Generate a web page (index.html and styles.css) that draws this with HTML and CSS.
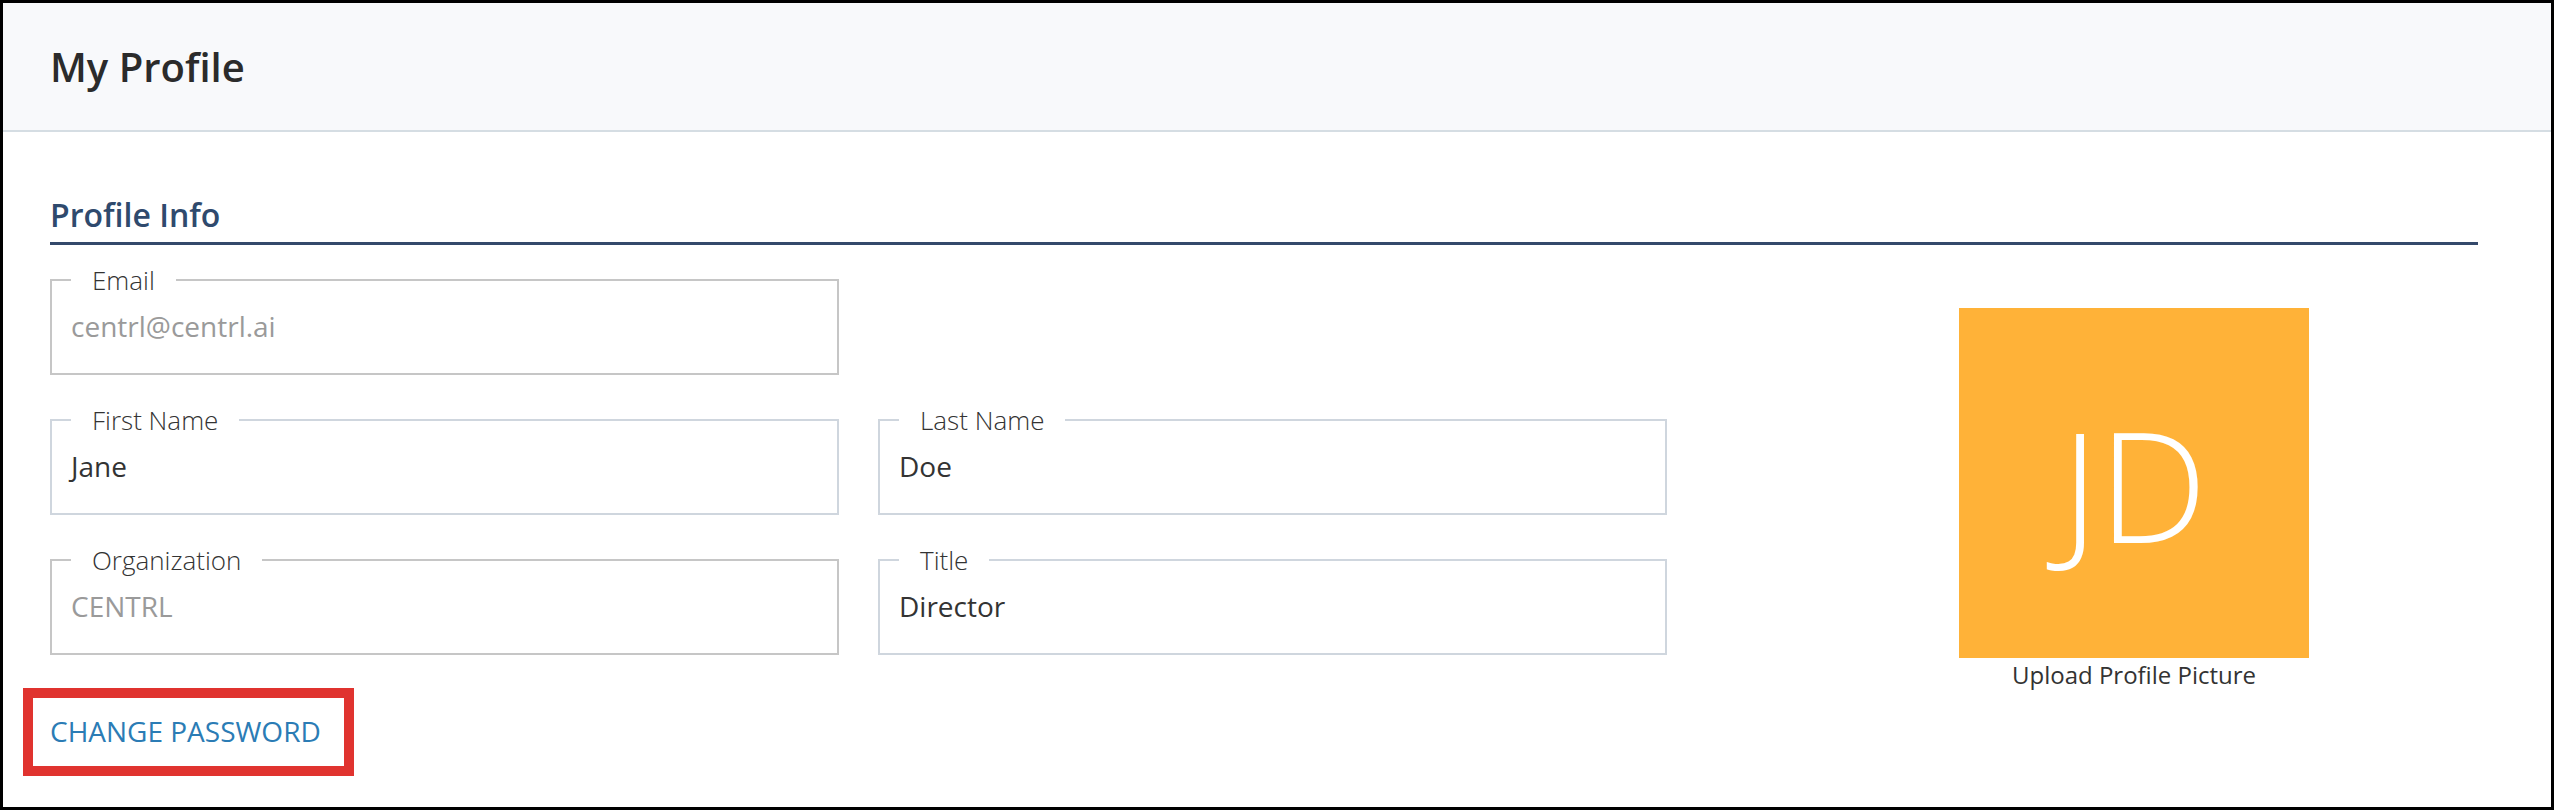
FILE: index.html
```html
<!DOCTYPE html>
<html lang="en">
<head>
<meta charset="utf-8">
<title>My Profile</title>
<link rel="stylesheet" href="styles.css">
</head>
<body>
<div class="page">
  <header class="page-header">
    <h1 class="page-title">My Profile</h1>
  </header>
  <main class="content">
    <h2 class="section-title">Profile Info</h2>
    <div class="profile-row">
      <div class="form-col">
        <div class="form-grid">
          <fieldset class="field field-disabled area-email">
            <legend class="field-label">Email</legend>
            <div class="field-value">centrl@centrl.ai</div>
          </fieldset>
          <fieldset class="field area-first">
            <legend class="field-label">First Name</legend>
            <div class="field-value">Jane</div>
          </fieldset>
          <fieldset class="field area-last">
            <legend class="field-label">Last Name</legend>
            <div class="field-value">Doe</div>
          </fieldset>
          <fieldset class="field field-disabled area-org">
            <legend class="field-label">Organization</legend>
            <div class="field-value">CENTRL</div>
          </fieldset>
          <fieldset class="field area-title">
            <legend class="field-label">Title</legend>
            <div class="field-value">Director</div>
          </fieldset>
        </div>
        <div class="password-row">
          <span class="highlight"><a class="change-password" href="#">CHANGE PASSWORD</a></span>
        </div>
      </div>
      <div class="avatar-col">
        <div class="avatar">JD</div>
        <div class="avatar-caption">Upload Profile Picture</div>
      </div>
    </div>
  </main>
</div>
</body>
</html>
```
FILE: styles.css
```css
html, body {
  margin: 0;
  padding: 0;
}

body {
  font-family: "Open Sans", "Noto Sans", sans-serif;
  background: #fff;
}

.page {
  box-sizing: border-box;
  width: 2554px;
  height: 810px;
  border: 3px solid #000;
  background: #fff;
  overflow: hidden;
}

.page-header {
  height: 127px;
  padding: 0 47px;
  display: flex;
  align-items: center;
  background: #f8f9fb;
  border-bottom: 2px solid #d5dde3;
}

.page-title {
  margin: 0;
  font-size: 40px;
  line-height: 53px;
  font-weight: 600;
  color: #2b2b2b;
}

.content {
  padding: 0 73px 0 47px;
}

.section-title {
  margin: 61px 0 0;
  padding-bottom: 5px;
  font-size: 32px;
  line-height: 44px;
  font-weight: 600;
  color: #2f4a6d;
  border-bottom: 3px solid #34496b;
}

.profile-row {
  display: flex;
  align-items: flex-start;
  margin-top: 17px;
}

.form-col {
  display: flex;
  flex-direction: column;
}

.form-grid {
  display: grid;
  grid-template-columns: 789px 789px;
  grid-template-areas:
    "email ."
    "first last"
    "org title";
  column-gap: 39px;
  row-gap: 27px;
}

.area-email { grid-area: email; }
.area-first { grid-area: first; }
.area-last { grid-area: last; }
.area-org { grid-area: org; }
.area-title { grid-area: title; }

.field {
  margin: 0;
  min-width: 0;
  padding: 10px 19px 29px;
  border: 2px solid #cfd6de;
}

.field-disabled {
  border-color: #c6c6c6;
}

.field-label {
  padding: 0 21px;
  font-size: 26px;
  line-height: 36px;
  font-weight: 300;
  color: #333;
}

.field-value {
  font-size: 28px;
  line-height: 36px;
  font-weight: 400;
  color: #333;
}

.field-disabled .field-value {
  color: #9a9a9a;
}

.avatar-col {
  margin-left: 292px;
  margin-top: 46px;
  width: 350px;
}

.avatar {
  width: 350px;
  height: 350px;
  display: flex;
  align-items: center;
  justify-content: center;
  background: #ffb238;
  color: #fff;
  font-size: 154px;
  line-height: 1;
  font-weight: 300;
}

.avatar-caption {
  text-align: center;
  font-size: 24px;
  line-height: 33px;
  color: #333;
}

.password-row {
  margin-top: 33px;
}

.highlight {
  display: inline-block;
  margin-left: -27px;
  padding: 14px 23px 16px 17px;
  border: 10px solid #e0332f;
}

.change-password {
  font-size: 28px;
  line-height: 38px;
  color: #2b7cb5;
  text-decoration: none;
}
```
